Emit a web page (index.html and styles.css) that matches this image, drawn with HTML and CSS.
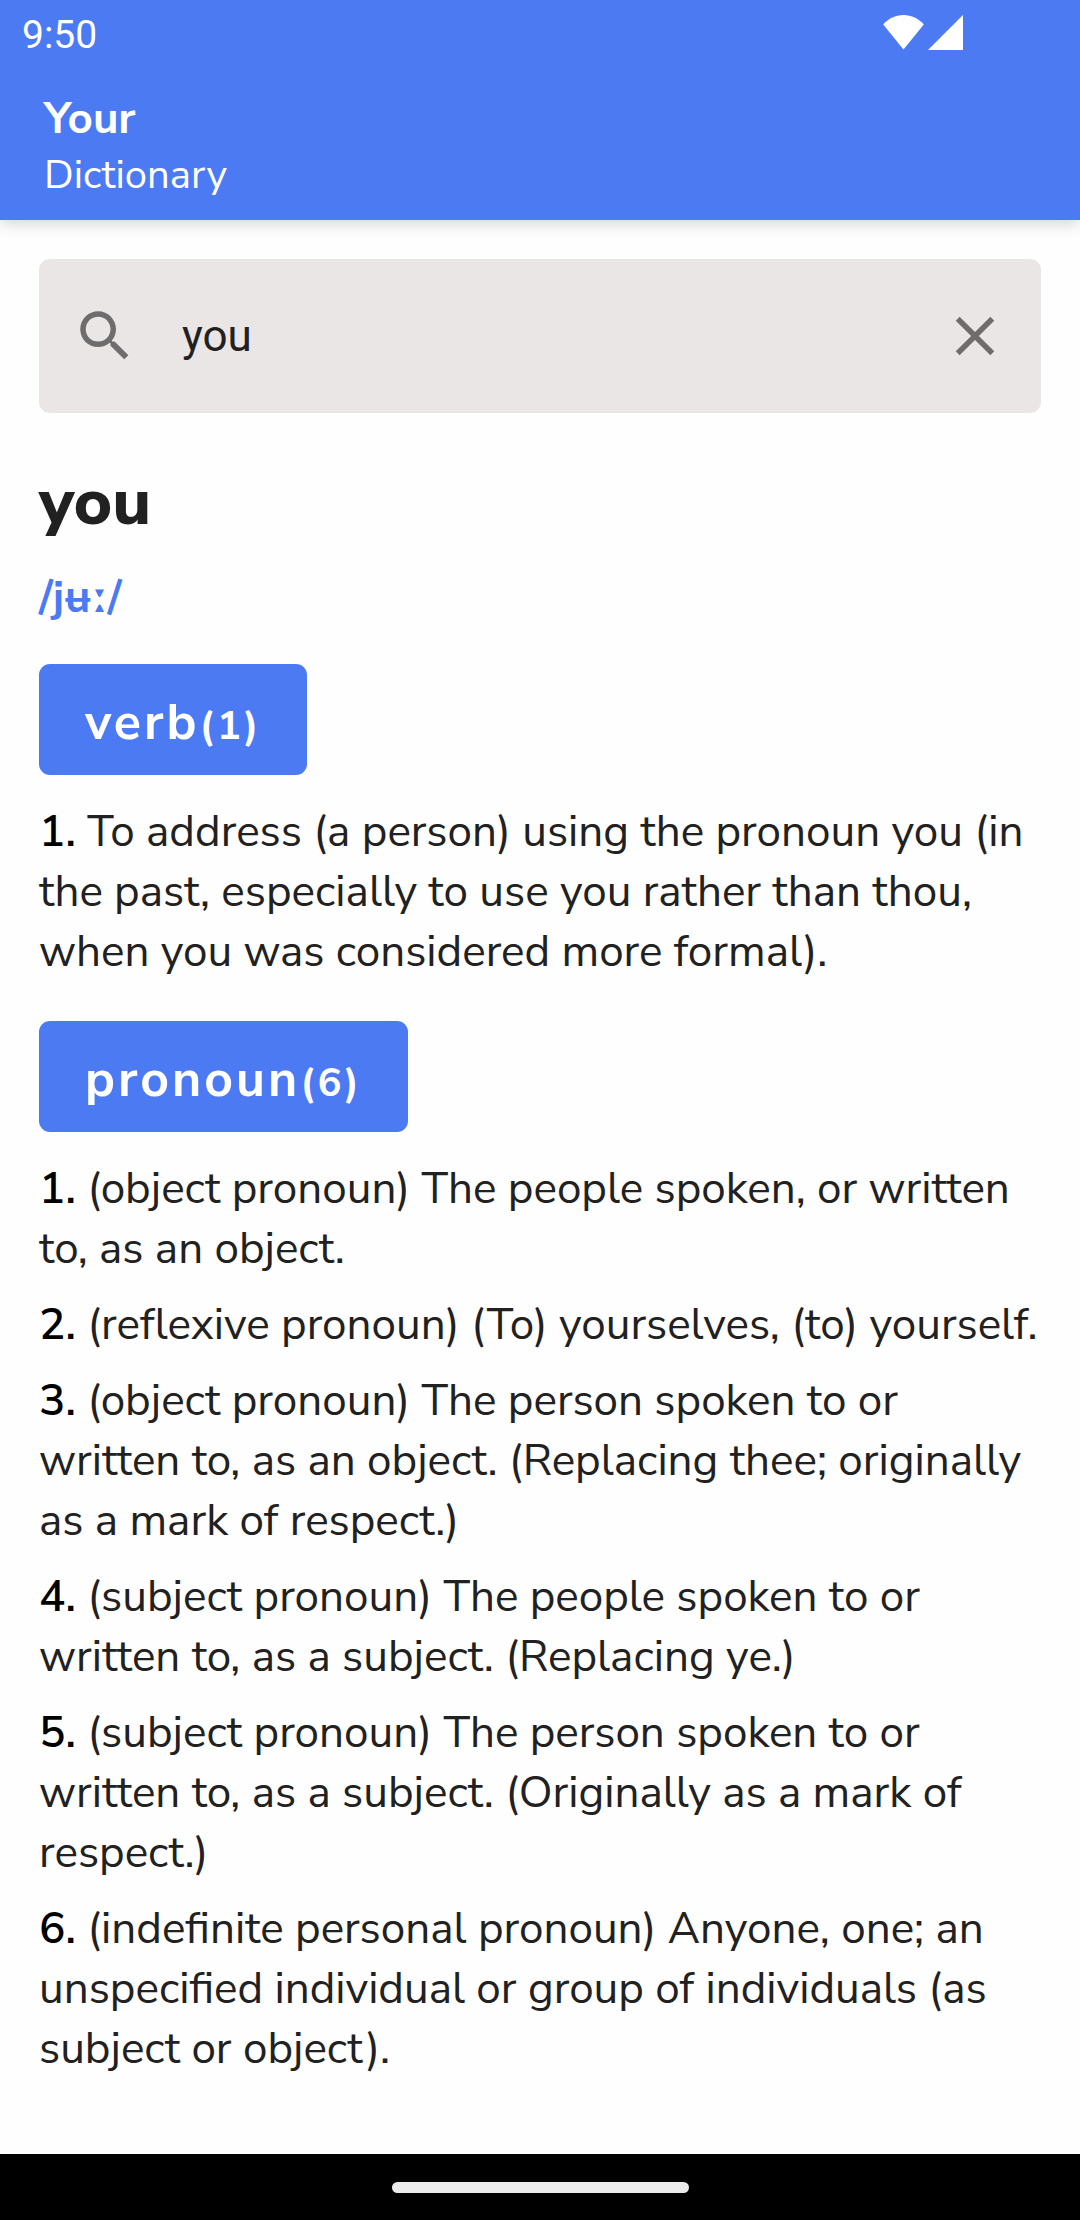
FILE: index.html
```html
<!DOCTYPE html>
<html lang="en">
<head>
<meta charset="utf-8">
<meta name="viewport" content="width=device-width, initial-scale=1">
<title>Your Dictionary</title>
<link rel="stylesheet" href="styles.css">
</head>
<body>
<header class="app-bar">
  <div class="status-bar">
    <time class="clock">9:50</time>
    <div class="status-icons">
      <svg width="41" height="35" viewBox="0 0 41 35" aria-hidden="true"><path d="M20.500 34.500.2 9.500C5.500 3.500 12.500 0 20.500 0s15 3.500 20.300 9.500z"/></svg>
      <svg width="35" height="35" viewBox="0 0 35 35" aria-hidden="true"><path d="M0 35 35 0v35z"/></svg>
    </div>
  </div>
  <h1 class="brand"><span class="brand-name">Your</span><span class="brand-kind">Dictionary</span></h1>
</header>
<main class="content">
  <form class="search" role="search">
    <label class="search-label" for="word"><svg class="icon" viewBox="0 0 24 24" role="img" aria-label="Search"><path d="M15.500 14h-.79l-.28-.27C15.410 12.590 16 11.110 16 9.500 16 5.910 13.090 3 9.500 3S3 5.910 3 9.500 5.910 16 9.500 16c1.610 0 3.090-.59 4.230-1.570l.27.28v.79l5 4.990L20.490 19l-4.990-5zm-6 0C7.010 14 5 11.990 5 9.500S7.010 5 9.500 5 14 7.010 14 9.500 11.990 14 9.500 14z"/></svg></label>
    <input class="search-input" id="word" type="text" value="you">
    <button class="clear" type="button" aria-label="Clear"><svg class="icon" viewBox="0 0 24 24" aria-hidden="true"><path d="M19 6.410 17.590 5 12 10.590 6.410 5 5 6.410 10.590 12 5 17.590 6.410 19 12 13.410 17.590 19 19 17.590 13.410 12z"/></svg></button>
  </form>
  <h2 class="word">you</h2>
  <p class="phonetic">/jʉː/</p>
  <section class="group">
    <h3 class="chip">verb<span class="count">(1)</span></h3>
    <ol class="meanings">
      <li><b>1.</b> To address (a person) using the pronoun you (in the past, especially to use you rather than thou, when you was considered more formal).</li>
    </ol>
  </section>
  <section class="group">
    <h3 class="chip">pronoun<span class="count">(6)</span></h3>
    <ol class="meanings">
      <li><b>1.</b> (object pronoun) The people spoken, or written to, as an object.</li>
      <li><b>2.</b> (reflexive pronoun) (To) yourselves, (to) yourself.</li>
      <li><b>3.</b> (object pronoun) The person spoken to or written to, as an object. (Replacing thee; originally as a mark of respect.)</li>
      <li><b>4.</b> (subject pronoun) The people spoken to or written to, as a subject. (Replacing ye.)</li>
      <li><b>5.</b> (subject pronoun) The person spoken to or written to, as a subject. (Originally as a mark of respect.)</li>
      <li><b>6.</b> (indefinite personal pronoun) Anyone, one; an unspecified individual or group of individuals (as subject or object).</li>
    </ol>
  </section>
</main>
<footer class="nav-bar"><div class="nav-handle"></div></footer>
</body>
</html>
```
FILE: styles.css
```css
* { box-sizing: border-box; }
body {
  margin: 0;
  min-height: 100vh;
  display: flex;
  flex-direction: column;
  background: #fefefe;
  color: #212121;
  font-family: "Nunito Sans", Nunito, Lato, sans-serif;
  font-size: 44px;
  line-height: 60px;
}
h1, h2, h3, p, ol { margin: 0; padding: 0; }
.app-bar {
  background: #4c7af2;
  color: #fff;
  padding-bottom: 17px;
  box-shadow: 0 4px 14px rgba(0, 0, 0, .16);
}
.status-bar {
  display: flex;
  justify-content: space-between;
  align-items: flex-start;
  height: 66px;
  padding: 0 117px 0 22px;
}
.clock { font: 39px/70px Roboto, sans-serif; }
.status-icons { display: flex; gap: 4px; padding-top: 15px; fill: #fff; }
.brand { display: flex; flex-direction: column; padding: 25px 44px 0; font-weight: 400; }
.brand-name { font-size: 44px; line-height: 56px; font-weight: 700; }
.brand-kind { font-size: 40px; line-height: 56px; }
.content { flex: 1; padding: 39px 39px 44px; }
.search {
  display: flex;
  align-items: center;
  height: 154px;
  padding: 0 33px;
  border-radius: 11px;
  background: #eae6e5;
}
.search-label { display: flex; }
.icon { width: 66px; height: 66px; fill: #6e6c6c; display: block; }
.search-input {
  flex: 1;
  min-width: 0;
  margin: 0 44px;
  padding: 0;
  border: 0;
  outline: 0;
  background: none;
  color: #212121;
  font: 44px/60px Roboto, sans-serif;
}
.clear { padding: 0; border: 0; background: none; }
.word { margin-top: 45px; font-size: 66px; line-height: 88px; font-weight: 800; }
.phonetic { margin-top: 22px; font-weight: 700; color: #4c7af2; }
.group { margin-top: 39px; }
.phonetic + .group { margin-top: 36px; }
.chip {
  width: fit-content;
  padding: 25px 46px 18px;
  border-radius: 11px;
  background: #4c7af2;
  color: #fff;
  font-size: 50px;
  line-height: 68px;
  letter-spacing: 3px;
}
.count { font-size: 40px; line-height: 40px; }
.meanings {
  list-style: none;
  display: flex;
  flex-direction: column;
  gap: 16px;
  margin-top: 27px;
}
.meanings b { color: #000; font-weight: 600; }
.nav-bar {
  display: flex;
  align-items: center;
  justify-content: center;
  height: 66px;
  background: #000;
}
.nav-handle { width: 297px; height: 11px; border-radius: 6px; background: #ebebeb; }
```
